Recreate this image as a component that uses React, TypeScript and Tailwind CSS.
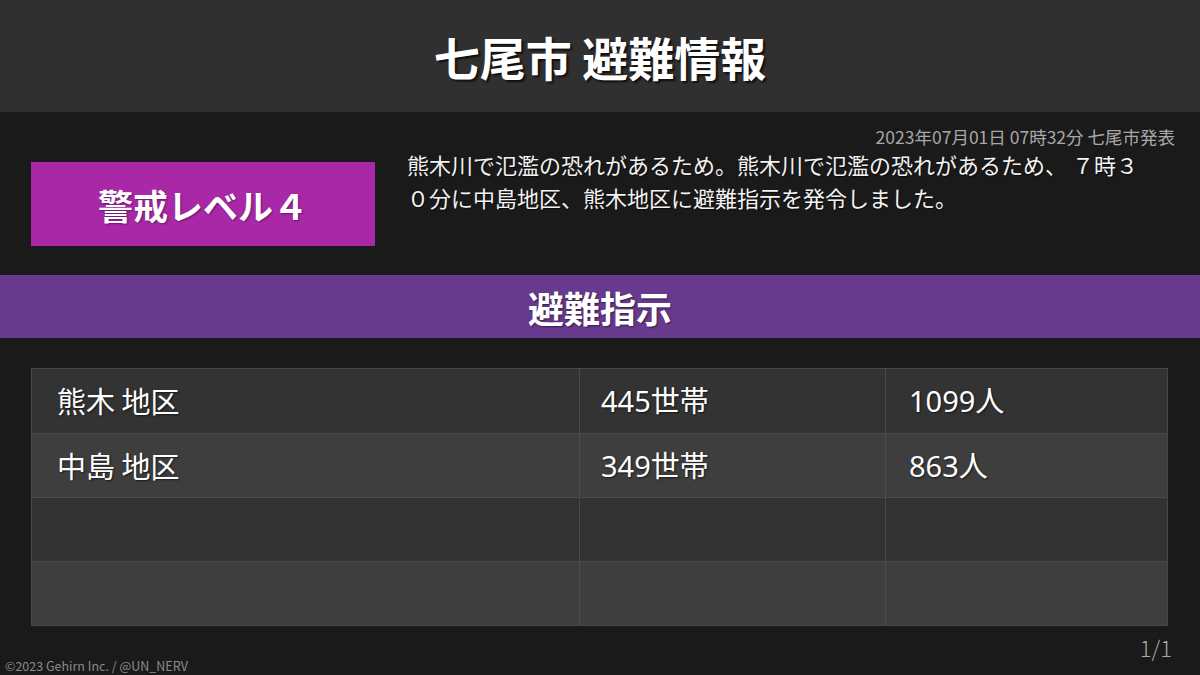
const jp = { fontFamily: '"Noto Sans CJK JP", "Noto Sans", sans-serif' };
const num = { fontFamily: '"Noto Sans", "Noto Sans CJK JP", sans-serif' };

const rows = [
  { area: "熊木 地区", households: "445世帯", people: "1099人" },
  { area: "中島 地区", households: "349世帯", people: "863人" },
  { area: "", households: "", people: "" },
  { area: "", households: "", people: "" },
];

export default function App() {
  return (
    <div className="w-[1200px] h-[675px] bg-[#1a1a1a] flex flex-col overflow-hidden" style={jp}>
      <header className="h-[112px] bg-[#303030] flex items-center justify-center">
        <h1 className="text-[46px] font-bold text-white leading-none [text-shadow:2px_2px_2px_rgba(0,0,0,0.7)]">
          七尾市 避難情報
        </h1>
      </header>

      <section className="h-[163px] flex flex-col">
        <p className="pt-[16px] pr-[25px] text-right text-[17.5px] leading-[18px] text-[#a8a8a8]">
          2023年07月01日 07時32分 七尾市発表
        </p>
        <div className="flex items-start pl-[31px]">
          <div className="mt-[16px] w-[344px] h-[84px] bg-[#a928a8] flex items-center justify-center">
            <span className="text-[35px] font-bold text-white leading-none [text-shadow:1px_1px_2px_rgba(0,0,0,0.4)]">
              警戒レベル４
            </span>
          </div>
          <p className="ml-[32px] mt-[2px] w-[748px] text-[22px] leading-[33px] text-[#f2f2f2] [text-shadow:1px_1px_1px_rgba(0,0,0,0.6)]">
            熊木川で氾濫の恐れがあるため。熊木川で氾濫の恐れがあるため、 ７時３０分に中島地区、熊木地区に避難指示を発令しました。
          </p>
        </div>
      </section>

      <div className="h-[63px] bg-[#673a8e] flex items-center justify-center">
        <h2 className="text-[36px] font-bold text-white leading-none [text-shadow:1px_1px_2px_rgba(0,0,0,0.5)]">
          避難指示
        </h2>
      </div>

      <div className="mt-[30px] ml-[31px] w-[1137px] border border-[#474747] flex flex-col">
        {rows.map((r, i) => (
          <div
            key={i}
            className={`h-[64px] flex text-[29px] text-white [text-shadow:1px_1px_2px_rgba(0,0,0,0.6)] ${
              i > 0 ? "border-t border-[#4a4a4a]" : ""
            } ${i % 2 === 0 ? "bg-[#333333]" : "bg-[#3e3e3e]"}`}
          >
            <div className="w-[547px] pl-[25px] flex items-center">{r.area}</div>
            <div className="w-[306px] pl-[21px] border-l border-[#4a4a4a] flex items-center" style={num}>
              {r.households}
            </div>
            <div className="flex-1 pl-[23px] border-l border-[#4a4a4a] flex items-center" style={num}>
              {r.people}
            </div>
          </div>
        ))}
      </div>

      <div className="flex-1 relative">
        <span className="absolute right-[28px] top-[10px] text-[22px] leading-none text-[#a8a8a8] font-light">1/1</span>
        <span className="absolute left-[5px] bottom-[2px] text-[12.5px] leading-[14px] text-[#8a8a8a]">
          ©2023 Gehirn Inc. / @UN_NERV
        </span>
      </div>
    </div>
  );
}
